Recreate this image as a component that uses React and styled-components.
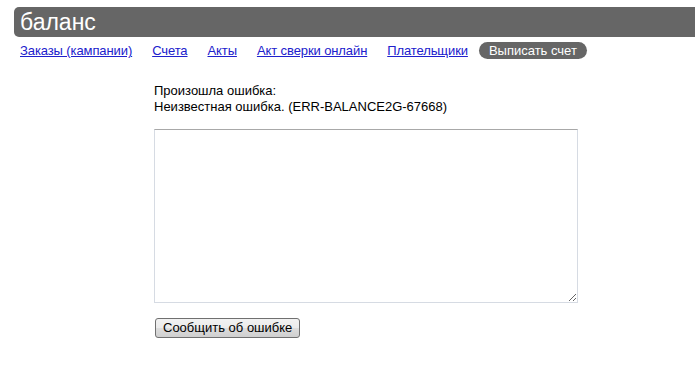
import React from 'react';
import styled, { createGlobalStyle } from 'styled-components';

const GlobalStyle = createGlobalStyle`
  body {
    margin: 0;
    background: #fff;
    font-family: "Liberation Sans", Arial, sans-serif;
    font-size: 13px;
    color: #000;
  }
`

const Page = styled.div`
  padding-top: 7px;
`

const Header = styled.div`
  margin-left: 14px;
  height: 30px;
  display: flex;
  align-items: center;
  padding-left: 6px;
  background: #666;
  border-radius: 5px 0 0 5px;
  color: #fff;
  font-size: 23px;
  line-height: 30px;
`

const Nav = styled.div`
  display: flex;
  align-items: center;
  gap: 20px;
  margin: 5px 0 0 20px;
  height: 17px;
`

const NavLink = styled.a`
  color: #2020cc;
  text-decoration: underline;
  font-size: 13px;
  letter-spacing: -0.1px;
  line-height: 17px;
  cursor: pointer;
`

const NavPill = styled.span`
  margin-left: -9px;
  padding: 0 10px;
  height: 17px;
  line-height: 17px;
  border-radius: 9px;
  background: #666;
  color: #fff;
  font-size: 13px;
`

const Content = styled.div`
  margin: 24px 0 0 154px;
  display: flex;
  flex-direction: column;
  align-items: flex-start;
`

const Message = styled.div`
  line-height: 16px;
`

const Box = styled.textarea`
  box-sizing: border-box;
  margin-top: 14px;
  width: 424px;
  height: 174px;
  border: 1px solid #d6dbe3;
  border-top-color: #a8a8a8;
  border-radius: 0;
  resize: both;
  font-family: "Liberation Sans", Arial, sans-serif;
  font-size: 13px;
  outline: none;
`

const ReportButton = styled.button`
  margin: 15px 0 0 1px;
  height: 20px;
  padding: 0 7px;
  border: 1px solid #707070;
  border-radius: 3px;
  background: linear-gradient(#f2f2f2 0%, #ebebeb 50%, #dddddd 51%, #cfcfcf 100%);
  font-family: "Liberation Sans", Arial, sans-serif;
  font-size: 13px;
  line-height: 16px;
  color: #000;
`

const links = ['Заказы (кампании)', 'Счета', 'Акты', 'Акт сверки онлайн', 'Плательщики']

export default function App() {
  return (
    <Page>
      <GlobalStyle />
      <Header>баланс</Header>
      <Nav>
        {links.map(l => <NavLink key={l}>{l}</NavLink>)}
        <NavPill>Выписать счет</NavPill>
      </Nav>
      <Content>
        <Message>
          Произошла ошибка:<br />
          Неизвестная ошибка. (ERR-BALANCE2G-67668)
        </Message>
        <Box />
        <ReportButton>Сообщить об ошибке</ReportButton>
      </Content>
    </Page>
  );
}
